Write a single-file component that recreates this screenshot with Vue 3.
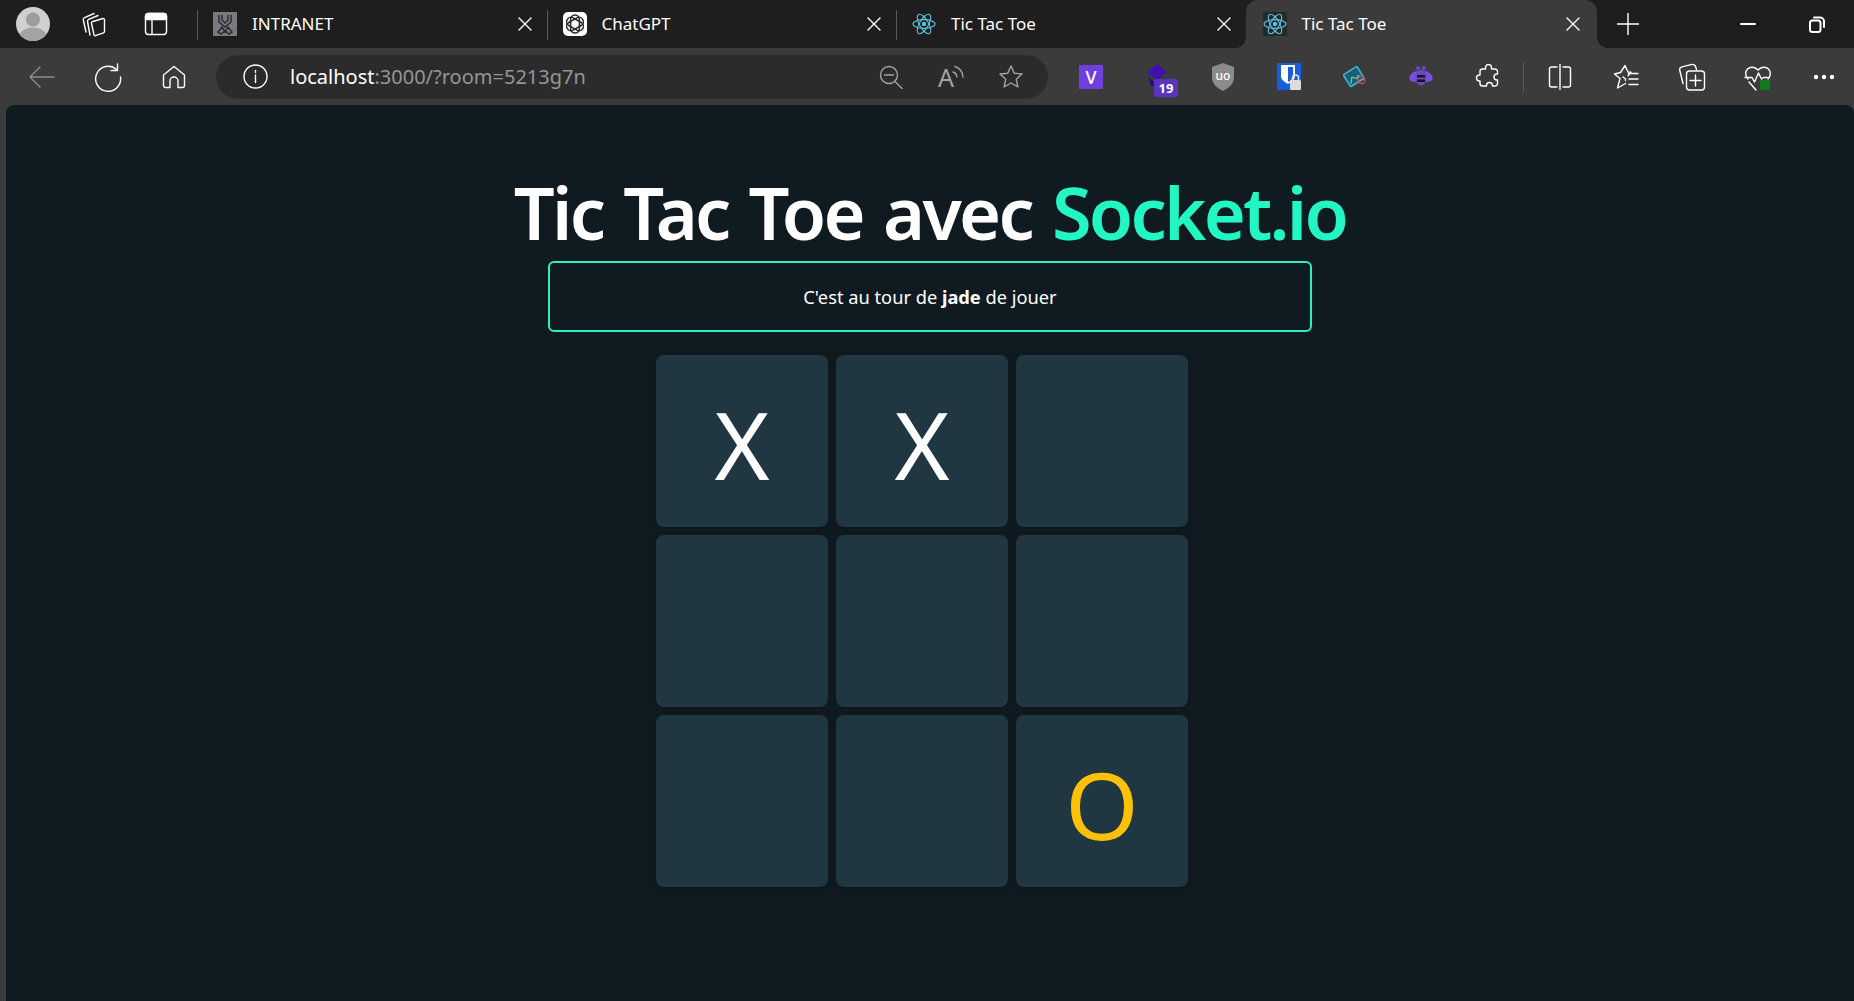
<script setup>
const tabs = [
  { title: 'INTRANET', icon: 'intranet' },
  { title: 'ChatGPT', icon: 'gpt' },
  { title: 'Tic Tac Toe', icon: 'react' },
  { title: 'Tic Tac Toe', icon: 'react', active: true },
]
const cells = ['X', 'X', '', '', '', '', '', '', 'O']
</script>

<template>
  <div class="browser">
    <header class="tabbar">
      <div class="avatar-btn">
        <svg class="avatar" viewBox="0 0 34 34">
          <defs><clipPath id="av"><circle cx="17" cy="17" r="17" /></clipPath></defs>
          <g clip-path="url(#av)">
            <rect width="34" height="34" fill="#d0d0d0" />
            <circle cx="17" cy="12.5" r="7" fill="#9c9c9c" />
            <ellipse cx="17" cy="31" rx="14" ry="10.5" fill="#a3a3a3" />
          </g>
        </svg>
      </div>
      <div class="sys-btn workspaces">
        <svg class="ic" width="28" height="28" viewBox="0 0 28 28">
          <path d="M7 22 4.300 10a2 2 0 0 1 1.200-2.300L15 3.500" />
          <path d="M11 25 8.500 11.500a2 2 0 0 1 1.200-2.200L19 5.500" />
          <path d="M14 11.500 24 8.500a1.200 1.200 0 0 1 1.500 1.200V21.500a1.500 1.500 0 0 1-1 1.400L16.500 25.700a1.200 1.200 0 0 1-1.500-1.100L12.500 13.500a1.500 1.500 0 0 1 1.500-2Z" />
        </svg>
      </div>
      <div class="sys-btn vertical">
        <svg class="ic" width="24" height="24" viewBox="0 0 24 24">
          <rect x="1.5" y="1.5" width="21" height="21" rx="3" />
          <path d="M1.5 4.5a3 3 0 0 1 3-3h15a3 3 0 0 1 3 3v3h-21Z" fill="#fff" />
          <path d="M8 7v15.5" />
        </svg>
      </div>

      <div v-for="(tab, i) in tabs" :key="i" class="tab" :class="{ active: tab.active }">
        <span class="favicon">
          <svg v-if="tab.icon === 'intranet'" viewBox="0 0 24 24" width="24" height="24">
            <rect width="24" height="24" fill="#7b7980" />
            <g fill="none" stroke="#2b2a30" stroke-width="1.500">
              <path d="M6 3v7l6 5 6-5V3" />
              <path d="M9 3v5l3 3 3-3V3" />
              <path d="M5 20l4-5 3 5 3-5 4 5-3 2-4-3-4 3Z" />
            </g>
          </svg>
          <svg v-else-if="tab.icon === 'gpt'" viewBox="0 0 24 24" width="24" height="24">
            <rect width="24" height="24" rx="5" fill="#fff" />
            <g fill="none" stroke="#2a2a2a" stroke-width="1.500">
              <rect x="7.600" y="3" width="8.800" height="18" rx="4.400" />
              <rect x="7.600" y="3" width="8.800" height="18" rx="4.400" transform="rotate(60 12 12)" />
              <rect x="7.600" y="3" width="8.800" height="18" rx="4.400" transform="rotate(120 12 12)" />
            </g>
          </svg>
          <svg v-else viewBox="0 0 24 24" width="24" height="24">
            <rect v-if="tab.active" width="24" height="24" fill="#23282d" />
            <g fill="none" stroke="#58c4dc" stroke-width="1.100">
              <ellipse cx="12" cy="12" rx="11" ry="4.400" />
              <ellipse cx="12" cy="12" rx="11" ry="4.400" transform="rotate(60 12 12)" />
              <ellipse cx="12" cy="12" rx="11" ry="4.400" transform="rotate(120 12 12)" />
            </g>
            <circle cx="12" cy="12" r="2.200" fill="#58c4dc" />
          </svg>
        </span>
        <span class="tab-title">{{ tab.title }}</span>
        <svg class="ic close" width="14" height="14" viewBox="0 0 14 14"><path d="M1 1l12 12M13 1 1 13" /></svg>
      </div>

      <div class="sys-btn plus">
        <svg class="ic" width="22" height="22" viewBox="0 0 22 22"><path d="M11 0v22M0 11h22" /></svg>
      </div>
      <div class="window-controls">
        <div class="win-btn"><svg class="ic bold" width="16" height="4" viewBox="0 0 16 4"><path d="M1 2h14" /></svg></div>
        <div class="win-btn">
          <svg class="ic bold" width="16" height="17" viewBox="0 0 16 17">
            <rect x="1" y="4.500" width="10.500" height="11.500" rx="2.500" />
            <path d="M5 1.500h6a4 4 0 0 1 4 4V11" />
          </svg>
        </div>
      </div>
    </header>

    <nav class="toolbar">
      <div class="tool dim">
        <svg class="ic" width="26" height="26" viewBox="0 0 26 26"><path d="M25 13H1M11 3 1 13l10 10" /></svg>
      </div>
      <div class="tool">
        <svg class="ic" width="30" height="30" viewBox="0 0 30 30">
          <path d="M23.500 7.500A12.500 12.500 0 1 0 27.500 15" />
          <path d="M24.500 2v6.500h-6.500" />
        </svg>
      </div>
      <div class="tool">
        <svg class="ic" width="24" height="24" viewBox="0 0 24 24">
          <path d="M12 1.500 22.500 10v10.500a2 2 0 0 1-2 2H16V16a4 4 0 0 0-8 0v6.500H3.500a2 2 0 0 1-2-2V10Z" />
        </svg>
      </div>

      <div class="address">
        <svg class="ic info" width="25" height="25" viewBox="0 0 25 25">
          <circle cx="12.500" cy="12.500" r="11.500" />
          <path d="M12.500 11v7.500M12.500 6.500v2" />
        </svg>
        <span class="url"><span class="host">localhost</span>:3000/?room=5213g7n</span>
        <div class="addr-actions">
          <div class="addr-action">
            <svg class="ic gray" width="24" height="24" viewBox="0 0 24 24">
              <circle cx="10" cy="10" r="8.500" /><path d="M16 16.500l7 7M5.500 10h9" />
            </svg>
          </div>
          <div class="addr-action">
            <span class="read-a">A</span>
            <svg class="ic gray waves" width="12" height="16" viewBox="0 0 12 16"><path d="M1 7a6 6 0 0 1 4 5M3 1.500a12 12 0 0 1 8 10.500" /></svg>
          </div>
          <div class="addr-action">
            <svg class="ic gray" width="26" height="26" viewBox="0 0 26 26">
              <path d="M13 2l3.300 7.200 7.700.8-5.800 5.200 1.700 7.800L13 19l-6.900 4 1.700-7.800L2 10l7.700-.8Z" />
            </svg>
          </div>
        </div>
      </div>

      <div class="tools-right">
        <div class="tool">
          <svg width="24" height="24" viewBox="0 0 24 24">
            <rect width="24" height="24" fill="#6f3fe0" />
            <text x="12" y="18.500" class="ext-v">V</text>
          </svg>
        </div>
        <div class="tool">
          <svg width="24" height="26" viewBox="0 0 24 26">
            <path d="M12 0l10 8-10 8L2 8Z" fill="#3f0fb0" />
            <path d="M3 13l9 7 7-5.500V22H6Z" fill="#2c0a86" />
          </svg>
          <span class="badge">19</span>
        </div>
        <div class="tool">
          <svg width="24" height="28" viewBox="0 0 24 28">
            <path d="M12 0l11 4v10c0 7-5 11-11 14C6 25 1 21 1 14V4Z" fill="#8b8b8b" />
            <text x="12" y="17" class="ext-ub">uo</text>
          </svg>
        </div>
        <div class="tool">
          <svg width="24" height="28" viewBox="0 0 24 28">
            <path d="M0 0h24v20l-8 7H0Z" fill="#175ddc" />
            <path d="M4 2h14v11c0 4-4 6-7 8-3-2-7-4-7-8Z" fill="#fff" />
            <path d="M11 4h5v10c0 2-3 4-5 5Z" fill="#175ddc" />
            <rect x="13" y="17" width="11" height="10" rx="1.500" fill="#ddd" />
            <path d="M15.500 17v-2a3 3 0 0 1 6 0v2" fill="none" stroke="#ddd" stroke-width="1.600" />
          </svg>
        </div>
        <div class="tool">
          <svg width="24" height="24" viewBox="0 0 24 24">
            <g transform="rotate(-32 11 12)">
              <rect x="3" y="4.500" width="16" height="14" rx="1" fill="#1d5f72" stroke="#3fb6d6" stroke-width="1.600" />
              <path d="M5 16l4-5 4 4 2-2 2 2" fill="none" stroke="#49d0c0" stroke-width="1.300" />
            </g>
            <circle cx="18.500" cy="15" r="3.500" fill="none" stroke="#c9464f" stroke-width="1.500" />
          </svg>
        </div>
        <div class="tool">
          <svg width="26" height="24" viewBox="0 0 26 24">
            <ellipse cx="8" cy="11.500" rx="7" ry="5" fill="#7a4fe0" transform="rotate(-25 8 11.500)" />
            <ellipse cx="18" cy="11.500" rx="7" ry="5" fill="#7a4fe0" transform="rotate(25 18 11.500)" />
            <circle cx="10" cy="3" r="2" fill="#6a45c4" />
            <circle cx="16" cy="3" r="2" fill="#6a45c4" />
            <ellipse cx="13" cy="12.500" rx="5.500" ry="8" fill="#6a45c4" />
            <path d="M9 10h8v2.500H9ZM9 14.500h8V17H9Z" fill="#16161c" />
          </svg>
        </div>
        <div class="tool">
          <svg class="ic" width="24" height="25" viewBox="-1.500 0 24 25">
            <path d="M9 3.500a3 3 0 0 1 6 0V5h3.500A2.500 2.500 0 0 1 21 7.500V10h-.5a3 3 0 0 0 0 6h.5v3.500a2.500 2.500 0 0 1-2.500 2.500H16v-.5a3 3 0 0 0-6 0v.5H6a2.500 2.500 0 0 1-2.500-2.500V17H3a3 3 0 0 1 0-6h.5V7.500A2.500 2.500 0 0 1 6 5h3Z" />
          </svg>
        </div>
        <span class="tool-sep"></span>
        <div class="tool">
          <svg class="ic" width="24" height="26" viewBox="0 0 24 26">
            <path d="M12 0v26" />
            <path d="M9 3H3.500a2 2 0 0 0-2 2v16a2 2 0 0 0 2 2H9M15 3h5.500a2 2 0 0 1 2 2v16a2 2 0 0 1-2 2H15" />
          </svg>
        </div>
        <div class="tool">
          <svg class="ic" width="26" height="26" viewBox="0 0 26 26">
            <path d="M12 1.500l3 6.500 3 .3-3 3.400M10 13l2.500 2v1.500M1.500 10l6-1.500L12 1.500M1.500 10l5.500 4.500L4.500 24l8-4.500" />
            <path d="M15.500 9.500H25M16 15h9M16 20.500h9" />
          </svg>
        </div>
        <div class="tool">
          <svg class="ic" width="28" height="28" viewBox="0 0 28 28">
            <path d="M5 20.500 1.800 7.500a3 3 0 0 1 2.200-3.600l9-2.300a4 4 0 0 1 4.800 2.600l.7 2.300" />
            <rect x="8.500" y="8" width="18" height="19" rx="3" />
            <path d="M17.500 12v11M12 17.500h11" />
          </svg>
        </div>
        <div class="tool">
          <svg class="ic" width="28" height="28" viewBox="0 0 28 28">
            <path d="M4 16C1 13 1 8.500 3.500 6s7-2.500 10.500 1c3.500-3.500 8-3.500 10.500-1s2.500 7-.5 10" />
            <path d="M1 14.500h7l2.500 4.500 4-9 3 6 2-1.500h4M5 19l7 8" />
            <rect x="16" y="17" width="10" height="10" rx="2" fill="#117a1a" stroke="none" />
          </svg>
        </div>
        <div class="tool">
          <svg width="22" height="6" viewBox="0 0 22 6" fill="#fff">
            <circle cx="3" cy="3" r="2.200" /><circle cx="11" cy="3" r="2.200" /><circle cx="19" cy="3" r="2.200" />
          </svg>
        </div>
      </div>
    </nav>

    <main class="page">
      <h1 class="title">Tic Tac Toe avec <span class="accent">Socket.io</span></h1>
      <div class="status">C'est au tour de&nbsp;<strong>jade</strong>&nbsp;de jouer</div>
      <div class="board">
        <div v-for="(c, i) in cells" :key="i" class="cell" :class="{ o: c === 'O' }">{{ c }}</div>
      </div>
    </main>
  </div>
</template>

<style>
html, body { margin: 0; background: #3b3b3b; overflow: hidden; }
</style>

<style scoped>
.browser {
  width: 1854px;
  height: 1001px;
  display: flex;
  flex-direction: column;
  background: #3b3b3b;
  font-family: "Noto Sans", "Open Sans", sans-serif;
  color: #fff;
  overflow: hidden;
}
.ic { fill: none; stroke: #fff; stroke-width: 1.4; stroke-linecap: round; stroke-linejoin: round; display: block; }
.ic.bold { stroke-width: 2; }
.ic.gray { stroke: #a3a3a3; }

.tabbar { height: 48px; flex: none; display: flex; align-items: center; background: #1e1e1e; }
.avatar-btn { width: 66px; display: flex; justify-content: center; }
.avatar { width: 34px; height: 34px; display: block; }
.sys-btn { display: flex; justify-content: center; align-items: center; }
.workspaces { width: 54px; }
.vertical { width: 72px; margin-right: 5px; }
.plus { width: 62px; }

.tab {
  position: relative;
  width: 349.5px;
  height: 48px;
  flex: none;
  box-sizing: border-box;
  padding: 0 16px 0 16px;
  display: flex;
  align-items: center;
  font-size: 17px;
}
.tab::before {
  content: "";
  position: absolute;
  left: 0;
  top: 10px;
  bottom: 8px;
  width: 1px;
  background: #585858;
}
.favicon { width: 24px; height: 24px; flex: none; margin-right: 15px; }
.favicon svg { display: block; }
.tab-title { flex: 1; white-space: nowrap; padding-bottom: 2px; }
.close { margin-right: -1px; flex: none; }
.tab.active {
  width: 351.5px;
  background: #3b3b3b;
  border-radius: 12px 12px 0 0;
  padding-left: 17px;
  padding-right: 18px;
}
.tab.active::before {
  left: -10px;
  top: auto;
  bottom: 0;
  width: 10px;
  height: 10px;
  background: radial-gradient(circle at 0 0, transparent 9.500px, #3b3b3b 10px);
}
.tab.active::after {
  content: "";
  position: absolute;
  right: -10px;
  bottom: 0;
  width: 10px;
  height: 10px;
  background: radial-gradient(circle at 100% 0, transparent 9.500px, #3b3b3b 10px);
}
.window-controls { margin-left: auto; padding-right: 3px; display: flex; }
.win-btn { width: 69px; height: 48px; display: flex; align-items: center; justify-content: center; }

.toolbar { height: 57px; flex: none; display: flex; align-items: center; padding-left: 9px; box-sizing: border-box; }
.tool { position: relative; width: 66px; height: 44px; flex: none; display: flex; align-items: center; justify-content: center; }
.tool.dim .ic { stroke: #8d8d8d; }

.address {
  width: 832px;
  height: 44px;
  margin-left: 9px;
  flex: none;
  box-sizing: border-box;
  padding-left: 27px;
  border-radius: 22px;
  background: #2b2b2b;
  display: flex;
  align-items: center;
}
.info { margin-right: 22px; flex: none; }
.url { font-size: 20px; color: #969696; white-space: nowrap; }
.host { color: #fff; }
.addr-actions { margin-left: auto; margin-right: 7px; display: flex; align-items: center; }
.addr-action { width: 60px; height: 32px; display: flex; align-items: center; justify-content: center; }
.read-a { font-size: 25px; line-height: 32px; color: #a3a3a3; }
.waves { margin: -8px 0 0 -2px; }

.tools-right { display: flex; align-items: center; margin-left: 10px; }
.ext-v { font: 500 18px "Noto Sans", sans-serif; fill: #fff; text-anchor: middle; }
.ext-ub { font: 500 12px "Noto Sans", sans-serif; fill: #fff; text-anchor: middle; }
.badge {
  position: absolute;
  left: 30px;
  top: 24px;
  width: 24px;
  height: 18px;
  background: #5b34bd;
  border-radius: 2px;
  font-size: 13px;
  font-weight: 700;
  line-height: 18px;
  text-align: center;
}
.tool-sep { width: 1px; height: 30px; margin: 0 3px; background: #5a5a5a; flex: none; }

.page {
  flex: 1;
  min-height: 0;
  margin-left: 6px;
  border-radius: 8px 8px 0 0;
  background: #101b21;
  display: flex;
  flex-direction: column;
  align-items: center;
}
.title {
  margin: 59px 0 0;
  font-size: 72px;
  line-height: 97px;
  font-weight: 600;
  letter-spacing: -2.7px;
  word-spacing: 4px;
  white-space: nowrap;
}
.accent { color: #22f7c4; }
.status {
  width: 764px;
  height: 71px;
  box-sizing: border-box;
  border: 2px solid #2ceec0;
  border-radius: 6px;
  display: flex;
  align-items: center;
  justify-content: center;
  font-size: 18.25px;
  white-space: nowrap;
}
.status strong { font-weight: 700; }
.board {
  margin-top: 23px;
  padding-right: 16px;
  display: grid;
  grid-template-columns: repeat(3, 172px);
  grid-auto-rows: 172px;
  gap: 8px;
}
.cell {
  border-radius: 8px;
  background: #203640;
  box-shadow: 0 2px 6px rgba(0, 0, 0, 0.25);
  display: flex;
  align-items: center;
  justify-content: center;
  padding-top: 6px;
  box-sizing: border-box;
  font-size: 94px;
  line-height: 1;
  color: #fff;
}
.cell.o { color: #ffc107; }
</style>
